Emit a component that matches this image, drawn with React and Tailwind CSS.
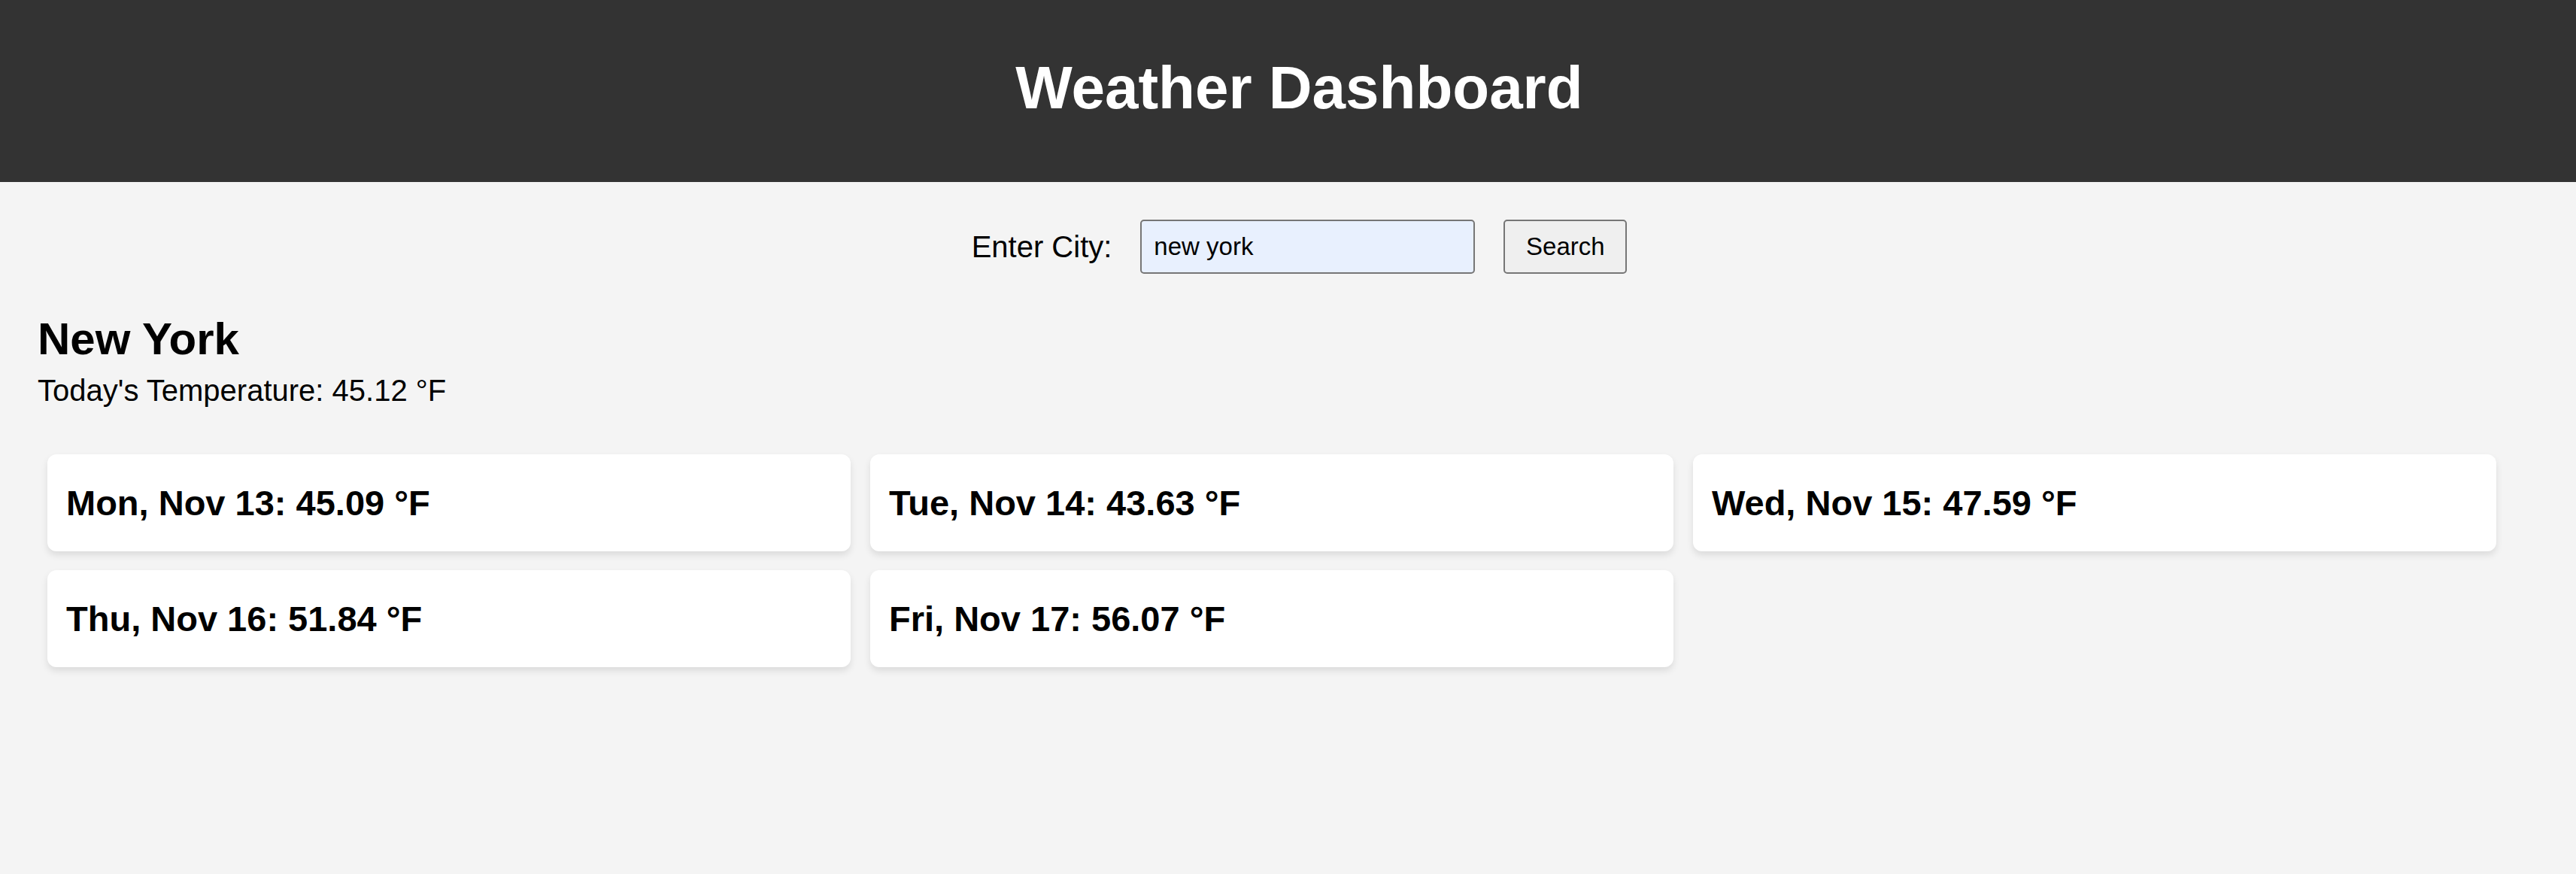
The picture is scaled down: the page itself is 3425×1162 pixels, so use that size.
import React, { useState } from "react";

const forecast = [
  { day: "Mon, Nov 13", temp: "45.09" },
  { day: "Tue, Nov 14", temp: "43.63" },
  { day: "Wed, Nov 15", temp: "47.59" },
  { day: "Thu, Nov 16", temp: "51.84" },
  { day: "Fri, Nov 17", temp: "56.07" },
];

function App() {
  const [city, setCity] = useState("new york");

  return (
    <div className="min-h-screen bg-[#f4f4f4] text-black font-['Liberation_Sans',Arial,sans-serif]">
      <header className="h-[242px] bg-[#333333] text-white pl-[30px]">
        <h1 className="pt-[71px] text-center text-[80px] leading-[92px] font-bold">
          Weather Dashboard
        </h1>
      </header>

      <div className="mt-[50px] pl-[30px] flex items-center justify-center">
        <label className="text-[40px] leading-[46px] mr-[38px]">Enter City:</label>
        <input
          type="text"
          value={city}
          onChange={(e) => setCity(e.target.value)}
          className="h-[72px] w-[445px] rounded-[5px] border-2 border-[#767676] bg-[#e8f0fe] px-[16px] text-[33px] outline-none"
        />
        <button className="ml-[38px] h-[72px] w-[164px] rounded-[5px] border-2 border-[#767676] bg-[#efefef] text-[33px]">
          Search
        </button>
      </div>

      <div className="mt-[52px] px-[50px]">
        <h2 className="text-[60px] leading-[69px] font-bold">New York</h2>
        <p className="mt-[11px] text-[40px] leading-[46px]">
          Today's Temperature: 45.12 °F
        </p>
      </div>

      <div className="mt-[62px] pl-[63px] grid grid-cols-[repeat(3,1068px)] gap-[25px_26px]">
        {forecast.map((f) => (
          <div
            key={f.day}
            className="h-[129px] flex items-center px-[25px] bg-white rounded-[12px] shadow-[0_5px_10px_rgba(0,0,0,0.1)]"
          >
            <h3 className="text-[47px] leading-[54px] font-bold">
              {f.day}: {f.temp} °F
            </h3>
          </div>
        ))}
      </div>
    </div>
  );
}

export default App;
